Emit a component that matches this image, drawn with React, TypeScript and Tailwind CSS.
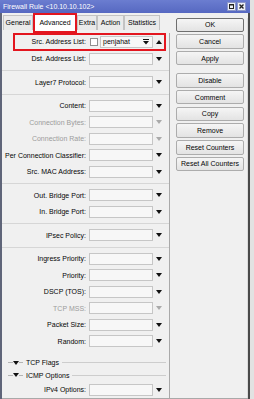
import React from 'react';

type FieldProps = { label: string; disabled?: boolean };

const Arrow = ({ disabled }: { disabled?: boolean }) => (
  <svg width="6" height="4" viewBox="0 0 6 4" className="shrink-0">
    <path d="M0 0H6L3 4Z" fill={disabled ? '#a9a9a9' : '#111'} />
  </svg>
);

const Field = ({ label, disabled }: FieldProps) => (
  <div className="flex h-[16.5px] items-center">
    <div className={`w-[84px] whitespace-nowrap text-right ${disabled ? 'text-[#9c9c9c]' : 'text-[#050505]'}`}>{label}</div>
    <div className="ml-[3px] h-[12px] w-[64px] border border-[#c6c6c6] bg-[#f7f7f7]" />
    <div className="ml-[3px]">
      <Arrow disabled={disabled} />
    </div>
  </div>
);

const Sep = () => (
  <div className="flex h-[7px] items-center">
    <div className="h-px w-full bg-[#d6d6d6]" />
  </div>
);

const Section = ({ label }: { label: string }) => (
  <div className="flex h-[12.5px] items-center pl-[6px] pr-[3px]">
    <div className="h-px w-[5px] bg-[#b4b4b4]" />
    <Arrow />
    <div className="h-px w-[4px] bg-[#b4b4b4]" />
    <span className="ml-[3px] whitespace-nowrap text-[#050505]">{label}</span>
    <div className="ml-[3px] h-px flex-1 bg-[#cdcdcd]" />
  </div>
);

const Btn = ({ label, primary }: { label: string; primary?: boolean }) => (
  <div
    className={`flex h-[14.5px] w-[68px] items-center justify-center rounded-[2px] border bg-gradient-to-b from-[#f5f5f5] to-[#e3e3e3] text-[#050505] ${
      primary ? 'border-[#6f6f6f]' : 'border-[#acacac]'
    }`}
  >
    {label}
  </div>
);

const tabs = ['General', 'Advanced', 'Extra', 'Action', 'Statistics'];
const tabWidths: Record<string, string> = {
  General: 'w-[30px]',
  Advanced: 'w-[44px]',
  Extra: 'w-[20px]',
  Action: 'w-[27px]',
  Statistics: 'w-[36px]',
};

export default function App() {
  return (
    <div className="flex h-[399px] w-[254px] bg-[#e2e2e2] font-['Liberation_Sans',Arial,sans-serif] text-[7px] leading-none">
      <div className="flex h-full w-[250px] flex-col">
        {/* title bar */}
        <div className="flex h-[13px] items-center bg-gradient-to-b from-[#6b7dd0] to-[#5668c1] pl-[3px] pr-[4px]">
          <span className="text-white">Firewall Rule &lt;10.10.10.102&gt;</span>
          <div className="ml-auto flex gap-[1px]">
            <div className="flex h-[9px] w-[9px] items-center justify-center border border-[#8d98c8] bg-[#eef0f7]">
              <svg width="5" height="5" viewBox="0 0 5 5">
                <rect x="0.5" y="0.5" width="4" height="4" fill="none" stroke="#222" />
                <rect x="0" y="0" width="5" height="1.5" fill="#222" />
              </svg>
            </div>
            <div className="flex h-[9px] w-[9px] items-center justify-center border border-[#8d98c8] bg-[#eef0f7]">
              <svg width="5" height="5" viewBox="0 0 5 5">
                <path d="M0.5 0.5L4.5 4.5M4.5 0.5L0.5 4.5" stroke="#222" strokeWidth="1.4" />
              </svg>
            </div>
          </div>
        </div>

        <div className="flex flex-1 border-l-2 border-r-2 border-l-[#5f6579] border-r-[#4a4a4a] bg-[#f0f0f0]">
          {/* left side */}
          <div className="flex w-[168px] flex-col">
            <div className="flex h-[20px] items-start pl-[1px]">
              {tabs.map((t) =>
                t === 'Advanced' ? (
                  <div
                    key={t}
                    className={`${tabWidths[t]} flex h-[20px] items-center justify-center border-2 border-[#e3161f] bg-white text-[#050505]`}
                  >
                    {t}
                  </div>
                ) : (
                  <div
                    key={t}
                    className={`${tabWidths[t]} mt-[2px] flex h-[15px] items-center justify-center border border-b-0 border-[#c3c3c3] bg-[#eaeaea] text-[#050505]`}
                  >
                    {t}
                  </div>
                )
              )}
            </div>

            <div className="flex flex-1 flex-col border-b border-r border-[#a9a9a9]">
              {/* Src. Address List (highlighted) */}
              <div className="ml-[11px] flex h-[18px] w-[153px] items-center border-2 border-[#e3161f]">
                <div className="w-[71px] whitespace-nowrap text-right text-[#050505]">Src. Address List:</div>
                <div className="ml-[4px] h-[8px] w-[8px] border border-[#909090] bg-white" />
                <div className="ml-[2px] flex h-[12px] w-[53px] items-center border border-[#c6c6c6] bg-[#f7f7f7] pl-[2px] pr-[3px]">
                  <span className="text-[#050505]">penjahat</span>
                  <svg width="6" height="6" viewBox="0 0 6 6" className="ml-auto">
                    <rect x="0" y="0" width="6" height="1" fill="#111" />
                    <path d="M0 2H6L3 5.5Z" fill="#111" />
                  </svg>
                </div>
                <svg width="6" height="4" viewBox="0 0 6 4" className="ml-[3px]">
                  <path d="M0 4H6L3 0Z" fill="#111" />
                </svg>
              </div>
              <Field label="Dst. Address List:" />
              <Sep />
              <Field label="Layer7 Protocol:" />
              <Sep />
              <Field label="Content:" />
              <Field label="Connection Bytes:" disabled />
              <Field label="Connection Rate:" disabled />
              <Field label="Per Connection Classifier:" />
              <Field label="Src. MAC Address:" />
              <Sep />
              <Field label="Out. Bridge Port:" />
              <Field label="In. Bridge Port:" />
              <Sep />
              <Field label="IPsec Policy:" />
              <Sep />
              <Field label="Ingress Priority:" />
              <Field label="Priority:" />
              <Field label="DSCP (TOS):" />
              <Field label="TCP MSS:" disabled />
              <Field label="Packet Size:" />
              <Field label="Random:" />
              <div className="h-[7px]" />
              <Section label="TCP Flags" />
              <Section label="ICMP Options" />
              <Field label="IPv4 Options:" />
            </div>
          </div>

          {/* right side buttons */}
          <div className="flex flex-1 flex-col border-b border-[#a9a9a9] pl-[6px] pt-[5px]">
            <div className="flex h-full flex-col gap-[2.2px] border-r border-[#dcdcdc]">
              <Btn label="OK" primary />
              <Btn label="Cancel" />
              <Btn label="Apply" />
              <div className="h-[3.5px]" />
              <Btn label="Disable" />
              <Btn label="Comment" />
              <Btn label="Copy" />
              <Btn label="Remove" />
              <Btn label="Reset Counters" />
              <Btn label="Reset All Counters" />
            </div>
          </div>
        </div>
      </div>
    </div>
  );
}
